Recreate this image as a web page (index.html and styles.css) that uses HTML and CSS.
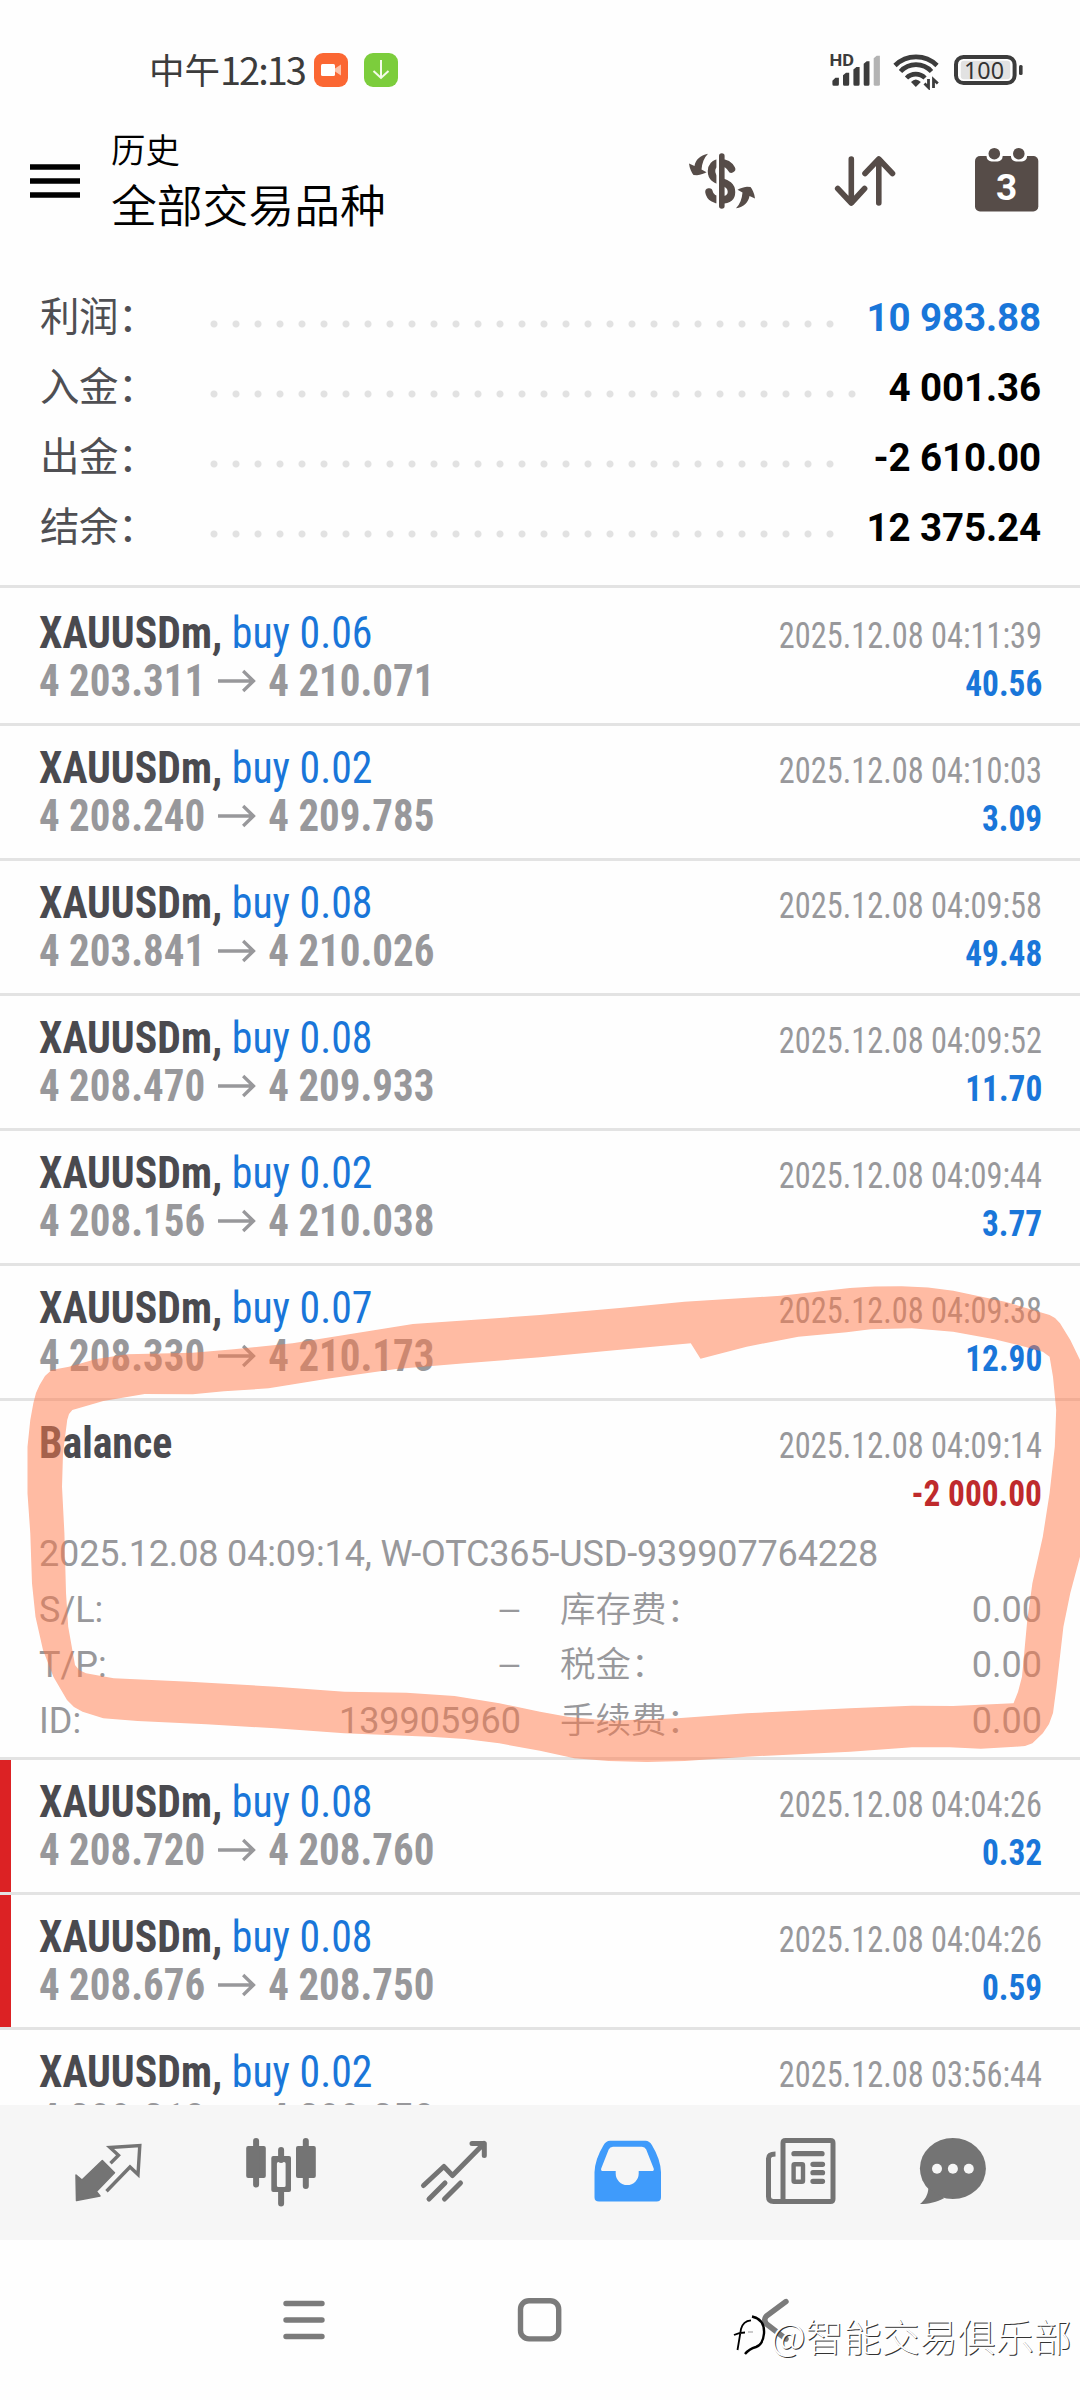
FILE: index.html
```html
<!DOCTYPE html>
<html lang="zh-CN">
<head>
<meta charset="utf-8">
<title>历史</title>
<link rel="stylesheet" href="styles.css">
</head>
<body>
<svg class="defs" width="0" height="0"><symbol id="arrow" viewBox="0 0 41 24"><path d="M0 12h38M27 2l11 10-11 10" fill="none" stroke="#98989b" stroke-width="3.600"/></symbol></svg>
<div class="screen">
  <header class="status">
    <div class="clock"><span>中午</span><span class="clock-digits">12:13</span></div>
    <svg class="badge video" width="34" height="34" viewBox="0 0 34 34"><rect width="34" height="34" rx="9" fill="#fb6733"/><rect x="7" y="11" width="14" height="12" rx="1.500" fill="#fff"/><path d="M21 15.500l6-4v11l-6-4z" fill="#fdc3ab"/></svg>
    <svg class="badge" width="34" height="34" viewBox="0 0 34 34"><rect width="34" height="34" rx="9" fill="#7ccd3c"/><path d="M17 7v18M9.500 18l7.500 7 7.500-7" fill="none" stroke="#f4fbe9" stroke-width="2"/></svg>
    <svg class="system-icons" width="200" height="40" viewBox="828 50 200 40">
      <text class="hd" x="829.500" y="66" textLength="24.500" lengthAdjust="spacingAndGlyphs">HD</text>
      <path fill="#3c3c3c" d="M832.400 84.200v-3.500l3-3h3.500v6.500q0 1.500-1.500 1.500h-3.500q-1.500 0-1.500-1.500zM843 84.200v-9l3-2.500h3.200v11.500q0 1.500-1.500 1.500h-3.200q-1.500 0-1.500-1.500zM853.400 84.200V69.500l3-2.500h3.200v17.200q0 1.500-1.500 1.500h-3.200q-1.500 0-1.500-1.500zM863.700 84.200V63.800l3-2.500h2.800v22.900q0 1.500-1.500 1.500h-2.800q-1.500 0-1.500-1.500z"/>
      <path d="M873.700 84.200V58.200l3-2.500h3.200v28.500q0 1.500-1.500 1.500h-3.200q-1.500 0-1.500-1.500z" fill="#b3b3b3"/>
      <path fill="none" stroke="#3c3c3c" stroke-width="4.600" d="M895 65.500A30 30 0 0 1 937 65.500M900.500 71.500A21 21 0 0 1 931.500 71.500M906.500 78A13 13 0 0 1 925 78"/>
      <path d="M911 82q4.700-5 9.800 0l-5 5z" fill="#3c3c3c"/>
      <path d="M928.500 79v8.500l-4-4M933.500 88v-8.500l4.300 4" fill="none" stroke="#3c3c3c" stroke-width="2.800"/>
      <rect x="956" y="57" width="58.600" height="26" rx="7.500" fill="none" stroke="#3c3c3c" stroke-width="4"/>
      <rect x="960.800" y="60.700" width="49.400" height="18.600" rx="3" fill="#e2e2e2"/>
      <rect x="1019" y="65" width="3.600" height="10" rx="1.500" fill="#3c3c3c"/>
      <text class="battery" x="964" y="78.500" textLength="40" lengthAdjust="spacingAndGlyphs">100</text>
    </svg>
  </header>

  <div class="toolbar">
    <svg class="menu" width="50" height="34" viewBox="0 0 50 34"><path d="M0 3h50M0 17h50M0 31h50" stroke="#000" stroke-width="5.700"/></svg>
    <div class="titles"><div class="title">历史</div><div class="subtitle">全部交易品种</div></div>
    <svg class="tools" width="360" height="70" viewBox="685 146 360 70">
      <path fill="none" stroke="#564c48" stroke-width="7.500" stroke-linecap="round" d="M731.500 169C729 164 725 162.700 720 162.700C714 162.700 711.500 167 711.500 171C711.500 178 716 179.500 721 181.500C727 183.500 731.500 185.500 731.500 192C731.500 198 727 200 721 200C715 200 710 197.500 709 192"/>
      <path d="M717.700 156v50" stroke="#fff" stroke-width="2.600"/>
      <path d="M721.800 156v50" stroke="#564c48" stroke-width="5.600" stroke-linecap="round"/>
      <path id="swirl" fill="#564c48" d="M708 153.700C700 155 695.500 160 694.500 166L689 163.500C689.500 169 692 173 693.500 175L697 175.300C701 174.500 704 174 706.500 172.300L701.500 169.500C702 163 704 158 708 153.700Z"/>
      <use href="#swirl" transform="rotate(180 722 181)"/>
      <path fill="none" stroke="#564c48" stroke-width="5.600" stroke-linecap="round" stroke-linejoin="round" d="M851.300 159v43.500M837.700 188.500l13.600 14.500 13.300-14.500M878.800 203v-43.500M865 173.500l13.800-14.500 13.700 14.500"/>
      <rect x="975" y="156" width="63.300" height="55.500" rx="5" fill="#564c48"/>
      <rect x="986.600" y="148" width="16" height="13.500" rx="5" fill="#fff"/><rect x="1011" y="148" width="16" height="13.500" rx="5" fill="#fff"/>
      <circle cx="994.300" cy="153.700" r="5.800" fill="#564c48"/><circle cx="1018.800" cy="153.700" r="5.800" fill="#564c48"/>
      <text class="day" x="1006.700" y="199.500">3</text>
    </svg>
  </div>

  <section class="summary">
    <div class="sum-row"><span class="sum-label">利润：</span><span class="dots"></span><b class="profit">10 983.88</b></div>
    <div class="sum-row"><span class="sum-label">入金：</span><span class="dots long"></span><b>4 001.36</b></div>
    <div class="sum-row"><span class="sum-label">出金：</span><span class="dots"></span><b>-2 610.00</b></div>
    <div class="sum-row"><span class="sum-label">结余：</span><span class="dots"></span><b>12 375.24</b></div>
  </section>

  <main class="deals">
    <article class="deal first"><div class="line"><span class="sym">XAUUSDm, <i>buy 0.06</i></span><time>2025.12.08 04:11:39</time></div><div class="line"><span class="price">4 203.311<svg><use href="#arrow"/></svg>4 210.071</span><b class="gain">40.56</b></div></article>
    <article class="deal"><div class="line"><span class="sym">XAUUSDm, <i>buy 0.02</i></span><time>2025.12.08 04:10:03</time></div><div class="line"><span class="price">4 208.240<svg><use href="#arrow"/></svg>4 209.785</span><b class="gain">3.09</b></div></article>
    <article class="deal"><div class="line"><span class="sym">XAUUSDm, <i>buy 0.08</i></span><time>2025.12.08 04:09:58</time></div><div class="line"><span class="price">4 203.841<svg><use href="#arrow"/></svg>4 210.026</span><b class="gain">49.48</b></div></article>
    <article class="deal"><div class="line"><span class="sym">XAUUSDm, <i>buy 0.08</i></span><time>2025.12.08 04:09:52</time></div><div class="line"><span class="price">4 208.470<svg><use href="#arrow"/></svg>4 209.933</span><b class="gain">11.70</b></div></article>
    <article class="deal"><div class="line"><span class="sym">XAUUSDm, <i>buy 0.02</i></span><time>2025.12.08 04:09:44</time></div><div class="line"><span class="price">4 208.156<svg><use href="#arrow"/></svg>4 210.038</span><b class="gain">3.77</b></div></article>
    <article class="deal"><div class="line"><span class="sym">XAUUSDm, <i>buy 0.07</i></span><time>2025.12.08 04:09:38</time></div><div class="line"><span class="price">4 208.330<svg><use href="#arrow"/></svg>4 210.173</span><b class="gain">12.90</b></div></article>
    <article class="deal balance">
      <div class="line"><span class="sym">Balance</span><time>2025.12.08 04:09:14</time></div>
      <div class="line amount"><b class="gain loss">-2 000.00</b></div>
      <div class="details">
        <div class="comment">2025.12.08 04:09:14, W-OTC365-USD-939907764228</div>
        <div class="pair"><span>S/L:</span><span class="dash">—</span></div><div class="pair"><span class="cn">库存费：</span><span>0.00</span></div>
        <div class="pair"><span>T/P:</span><span class="dash">—</span></div><div class="pair"><span class="cn">税金：</span><span>0.00</span></div>
        <div class="pair"><span>ID:</span><span>139905960</span></div><div class="pair"><span class="cn">手续费：</span><span>0.00</span></div>
      </div>
    </article>
    <article class="deal marked"><div class="line"><span class="sym">XAUUSDm, <i>buy 0.08</i></span><time>2025.12.08 04:04:26</time></div><div class="line"><span class="price">4 208.720<svg><use href="#arrow"/></svg>4 208.760</span><b class="gain">0.32</b></div></article>
    <article class="deal marked"><div class="line"><span class="sym">XAUUSDm, <i>buy 0.08</i></span><time>2025.12.08 04:04:26</time></div><div class="line"><span class="price">4 208.676<svg><use href="#arrow"/></svg>4 208.750</span><b class="gain">0.59</b></div></article>
    <article class="deal"><div class="line"><span class="sym">XAUUSDm, <i>buy 0.02</i></span><time>2025.12.08 03:56:44</time></div><div class="line"><span class="price">4 209.218<svg><use href="#arrow"/></svg>4 209.258</span></div></article>
  </main>

  <nav class="tabs">
    <svg width="1080" height="135" viewBox="0 2105 1080 135">
      <g fill="#747474">
        <path stroke="#747474" stroke-width="1.500" stroke-linejoin="round" d="M76 2175L82 2180L102.300 2160.500L114.500 2172.700L96.400 2191.500L100 2196L76.500 2200.500Z"/>
        <path fill="none" stroke="#747474" stroke-width="3.400" d="M110.500 2163.300L118.500 2155.300L110 2147.500L139.800 2145.500L138 2174.500L130 2167L106.500 2191.200"/>
        <rect x="246.200" y="2146" width="19.600" height="32" rx="2"/><path d="M256.100 2141v43.500M305.800 2141v45M281.100 2150v10M281.100 2190v13.500" stroke="#747474" stroke-width="6" stroke-linecap="round"/><rect x="296" y="2146" width="19.800" height="32" rx="2"/>
        <path fill-rule="evenodd" d="M273.300 2156h15.700q2 0 2 2v32q0 2-2 2h-15.700q-2 0-2-2v-32q0-2 2-2zM278.400 2162q-1.500 0-1.500 1.500v22q0 1.500 1.500 1.500h5.700q1.500 0 1.500-1.500v-22q0-1.500-1.500-1.500z"/>
        <path fill="none" stroke="#747474" stroke-width="5" stroke-linejoin="round" d="M423.500 2185.500l20.400-19 8.600 9 31.500-32M472 2143.500h12.300v12" stroke-linecap="round"/>
        <path stroke="#747474" stroke-width="5" stroke-linecap="round" d="M429 2199l16-16M444.500 2199l16-16"/>
        <path fill="#3f9bfb" fill-rule="evenodd" d="M610 2140.700h35.500q4 0 6.500 4.500 8.500 14 9 27v25q0 4.300-4.500 4.300h-57.500q-4.500 0-4.500-4.300v-25q.5-13 9-27 2.500-4.500 6.500-4.500zM613 2146.700q-3 0-4.300 2.700l-7.500 19q-.7 2.700 2 2.700h12.500v2.500a11.500 11.500 0 0 0 23 0v-2.500h13q2.700 0 2-2.700l-7.500-19q-1.300-2.700-4.300-2.700z"/>
        <path fill="none" stroke="#747474" stroke-width="5" d="M783 2201.500V2143q0-2.500 2.500-2.500h45q2.500 0 2.500 2.500v56q0 2.500-2.500 2.500h-57q-5 0-5-5v-38q0-4.500 7-4.500"/>
        <path d="M794 2153.700h28M813 2164.300h9.500M813 2172.700h9.500M813 2181.300h9.500" stroke="#747474" stroke-width="5.300" stroke-linecap="round"/>
        <rect x="793.600" y="2164.200" width="9.400" height="17.600" rx="1" fill="none" stroke="#747474" stroke-width="4.400"/>
        <ellipse cx="952.900" cy="2168.500" rx="33" ry="30.500"/><path d="M920 2204c5-4 8-9 8.400-16l16 10c-8 4-15 6-24.400 6z"/>
        <g fill="#f6f6f6"><circle cx="937" cy="2168.700" r="5"/><circle cx="952.900" cy="2168.700" r="5"/><circle cx="968.800" cy="2168.700" r="5"/></g>
      </g>
    </svg>
  </nav>
  <footer class="system-nav">
    <svg width="1080" height="160" viewBox="0 2240 1080 160" fill="none" stroke="#7b7b7b" stroke-width="5.400" stroke-linecap="round">
      <path d="M286 2303.500h36M286 2320h36M286 2336.500h36"/>
      <rect x="520.500" y="2300.700" width="38.200" height="38.200" rx="8.500"/>
      <path d="M786 2301.500l-19.500 14.500q-3.500 3.500 0 8l19.500 15" stroke-linejoin="round"/>
    </svg>
  </footer>

  <!-- highlighter loop round the balance entry -->
  <svg class="marker" width="1080" height="500" viewBox="0 1270 1080 500">
    <path fill="#ff7747" fill-opacity=".5" fill-rule="evenodd" d="M33.400 1403L36 1393L39.600 1385L45 1376L51.600 1370L69 1366.700L96.400 1359L127.400 1354.300L193 1352.700L234 1349.300L292.700 1343.300L344.400 1335L413 1324L482 1319.300L540 1315L622.600 1307.700L684.600 1301.700L781 1295.700L850 1288L875 1286.500L901.600 1286.300L928 1287.500L953.200 1290.700L1005 1301.700L1049.600 1315L1055 1318L1060 1323.300L1070.300 1340L1080 1360V1556.700L1070.300 1593L1063.400 1626.700L1056.500 1686.700L1053 1713L1049 1724L1042.800 1733.300L1032.400 1743.300L1025 1746L1015 1746.700L980.800 1748.700L949.800 1747.300L912 1747.300L850 1751.700L746.600 1756.700L684.600 1761L647 1762L608.900 1761L574.400 1758.300L540 1750.700L499.300 1743.300L465 1739L430.400 1736.700L344.400 1733.300L275.500 1728.300L206.600 1724.300L137.700 1721L103.300 1718.300L82.600 1711.700L74 1707L67 1700L53.400 1676.700L43 1650L35.500 1616.700L32 1583.300L30.300 1533.300L27.500 1493.300V1446.700L30.300 1420ZM72.300 1410L103.300 1401L144.600 1394L192.800 1394.300L223.800 1391.300L268.600 1388.300L330.600 1378.300L396 1369L464.900 1363.300L540 1357.300L608.900 1350.700L690.800 1343.300L700.500 1358.700L746.600 1346.700L798.300 1336.700L846.500 1332.300L870.600 1329.300L911.900 1328.300L953.200 1331.700L994.500 1339.300L1022 1346L1042.800 1351.700L1049.600 1356.700L1053 1376.700L1056.200 1410L1054.800 1446.700L1049.600 1493.300L1042.800 1536.700L1032.400 1583.300L1027.300 1620L1022 1676.700L1018 1692L1013.500 1703.300L953.200 1706L911.900 1705.700L850 1708.300L746.600 1713.300L677.700 1718.300L608.900 1720.700L567.500 1716.700L540 1711.700L499.300 1703.300L454.500 1696L406.300 1692.700L344.400 1691.700L275.500 1686.700L189.400 1681.700L113.600 1678.300L86 1673.300L79 1670L75 1665L68.200 1626.700L66 1593L64.400 1533.300L62 1486.700L63 1453.300L67.200 1420L69 1414Z"/>
  </svg>

  <div class="watermark">
    <svg width="36" height="44" viewBox="732 2320 36 44" fill="none" stroke="#000"><path stroke-width="1.800" d="M737.500 2357l3.500-21q2-8 10-8.700M734 2342q5-2.500 11-2.500"/><path stroke-width="2.400" d="M752 2323.500q13 3 12 17-1 11-8 13.500-7 2-11 7"/><path stroke-width="1" stroke="#999" d="M748 2339h5"/></svg>
    <span>@智能交易俱乐部</span>
  </div>
</div>
</body>
</html>
```
FILE: styles.css
```css
body {
  margin: 0;
  background: #fff;
  font-family: Roboto, "Noto Sans CJK SC", sans-serif;
}
.defs { display: none; }
svg { display: block; flex: none; }
.screen {
  position: relative;
  display: flex;
  flex-direction: column;
  width: 1080px;
  height: 2400px;
  overflow: hidden;
  background: #fefefe;
}

.status {
  display: flex;
  align-items: center;
  height: 120px;
  padding: 20px 52px 0 149px;
  box-sizing: border-box;
}
.clock {
  display: flex;
  width: 165px;
  margin-top: -3px;
  font: 400 35.500px/40px "Noto Sans CJK SC", sans-serif;
  color: #3c3c3c;
}
.clock-digits { font-size: 38px; letter-spacing: -2px; }
.video { margin-right: 16px; }
.system-icons { margin-left: auto; }
.hd { font: 700 17px Roboto, sans-serif; fill: #3c3c3c; }
.battery { font: 400 24px "Noto Sans", sans-serif; fill: #333; }

.toolbar {
  display: flex;
  align-items: center;
  height: 122px;
  padding: 0 35px 0 30px;
}
.menu { margin-right: 31px; }
.titles {
  margin-top: -5px;
  color: #000;
  font-family: "Noto Sans CJK SC", sans-serif;
  font-weight: 350;
}
.title { font-size: 34.500px; line-height: 44px; margin-bottom: 5px; }
.subtitle { font-size: 45.800px; line-height: 56px; }
.tools { margin-left: auto; }
.day { font: 700 37px Roboto, sans-serif; fill: #fff; text-anchor: middle; }

.summary { padding: 41px 39px 22px 39px; }
.sum-row {
  display: flex;
  height: 70px;
  line-height: 70px;
  font-size: 38.500px;
  color: #000;
}
.sum-label { width: 163px; padding-left: 1px; color: #4f4f53; font-size: 39.500px; letter-spacing: -0.5px; }
.dots {
  width: 638px;
  height: 22px;
  margin-top: 30px;
  background: radial-gradient(circle, #e2e2e2 3px, transparent 4px) 0 0 / 22px 22px;
}
.dots.long { width: 660px; }
.sum-row b { margin-left: auto; font-weight: 700; letter-spacing: -0.1px; }
.sum-row .profit { color: #1976d9; }

.deals {
  height: 1517px;
  border-top: 3px solid #e3e3e3;
  overflow: hidden;
}
.deal {
  height: 135px;
  padding: 18px 38px 0 39px;
  border-bottom: 3px solid #e3e3e3;
  box-sizing: border-box;
  font-stretch: 75%;
}
.first { height: 138px; padding-top: 21px; }
.marked { box-shadow: inset 11px 0 0 #dc2224; }
.line {
  display: flex;
  justify-content: space-between;
  align-items: baseline;
  height: 48px;
  line-height: 48px;
}
.sym {
  font-size: 44px;
  font-weight: 700;
  color: #4a4a4f;
  transform: scaleX(0.95);
  transform-origin: left;
}
.sym i { font-style: normal; font-weight: 400; color: #1976d9; }
.price {
  display: flex;
  align-items: baseline;
  font-size: 44px;
  font-weight: 700;
  color: #98989b;
  transform: scaleX(0.93);
  transform-origin: left;
}
.price svg { width: 44px; height: 24px; margin: 0 12px 0 12px; align-self: center; }
time {
  font-size: 36px;
  color: #98989b;
  transform: scaleX(0.898);
  transform-origin: right;
}
.gain {
  font-size: 36px;
  font-weight: 700;
  color: #1976d9;
  transform: scaleX(0.925);
  transform-origin: right;
}
.loss { color: #bf2a2c; }

.balance { height: 359px; }
.amount { justify-content: flex-end; padding-top: 3px; height: 45px; }
.details {
  display: grid;
  grid-template-columns: 482px 482px;
  column-gap: 39px;
  grid-auto-rows: 55.500px;
  margin-top: 12px;
  font-size: 36px;
  line-height: 55.500px;
  font-stretch: 100%;
  font-weight: 400;
  color: #98989b;
}
.comment { grid-column: 1 / 3; white-space: nowrap; letter-spacing: -0.15px; }
.pair { display: flex; justify-content: space-between; }
.cn { font-weight: 350; font-size: 35.500px; }
.dash { font-size: 30px; }

.tabs { height: 135px; background: #f6f6f6; }
.system-nav { height: 160px; }

.marker { position: absolute; left: 0; top: 1270px; }
.watermark {
  position: absolute;
  left: 732px;
  top: 2311px;
  display: flex;
  align-items: center;
  gap: 3px;
  font: 300 38px/48px "Noto Sans CJK SC", sans-serif;
  color: #fff;
  text-shadow: 1px 1px 0 #333;
  white-space: nowrap;
}
```
